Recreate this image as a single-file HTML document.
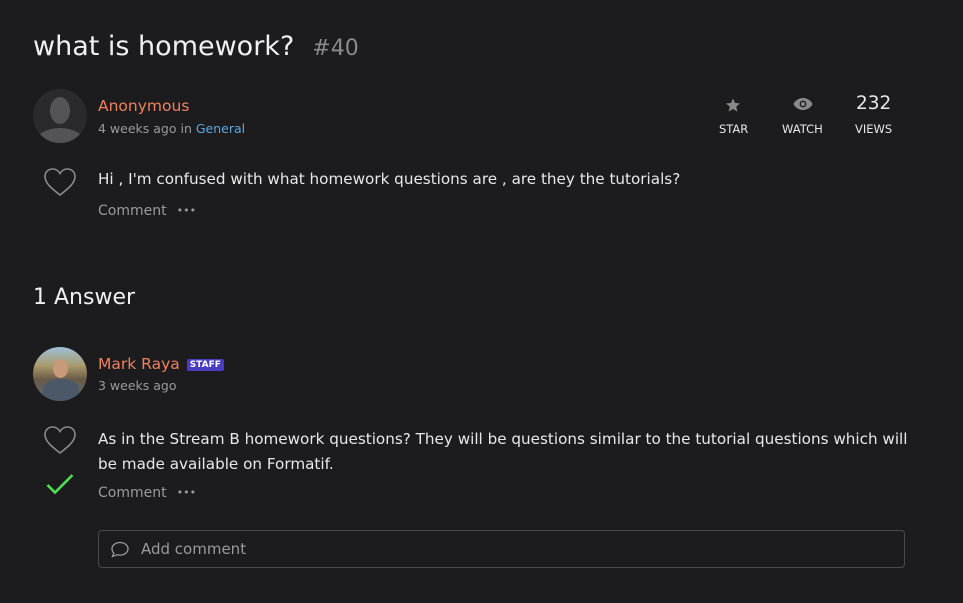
<!DOCTYPE html>
<html><head><meta charset="utf-8"><style>
body{margin:0;background:#1c1c1e;width:963px;height:603px;overflow:hidden;font-family:"DejaVu Sans","Liberation Sans",sans-serif;color:#e8e8e8;position:relative}
.a{position:absolute;white-space:nowrap}
.gray{color:#9a9a9a}
.or{color:#f0805c}
.dots{margin-left:10px;font-size:11px;vertical-align:1px}
</style></head><body>
<div class="a" style="left:33px;top:31px;font-size:27px;color:#f0f0f0">what is homework?<span style="color:#8a8a8a;font-size:22px;margin-left:18px">#40</span></div>
<div class="a" style="left:33px;top:89px;width:54px;height:54px;border-radius:50%;background:#2a2a2c;overflow:hidden">
<div style="position:absolute;left:17px;top:8px;width:20px;height:27px;border-radius:50%;background:#545456"></div>
<div style="position:absolute;left:2px;top:39px;width:50px;height:30px;border-radius:50%;background:#545456"></div></div>
<div class="a or" style="left:98px;top:97px;font-size:15.5px">Anonymous</div>
<div class="a gray" style="left:98px;top:121px;font-size:12.5px">4 weeks ago in <span style="color:#5aa8e6">General</span></div>
<svg class="a" style="left:725px;top:97px" width="16" height="16" viewBox="0 0 24 24"><path fill="#8a8a8a" d="M12 2l3 7 7.5.6-5.7 5 1.8 7.4L12 18l-6.6 4 1.8-7.4-5.7-5L9 9z"/></svg>
<div class="a" style="left:719px;top:122px;font-size:11.5px">STAR</div>
<svg class="a" style="left:793px;top:97px" width="20" height="14" viewBox="0 0 20 14"><path fill="#8a8a8a" d="M10 1C5 1 1.5 4.5 0.5 7 1.5 9.5 5 13 10 13s8.5-3.5 9.5-6C18.5 4.5 15 1 10 1z"/><circle cx="10" cy="7" r="3.4" fill="#1c1c1e"/><circle cx="10" cy="7" r="2" fill="#8a8a8a"/></svg>
<div class="a" style="left:782px;top:122px;font-size:11.5px">WATCH</div>
<div class="a" style="left:856px;top:93px;font-size:18.5px">232</div>
<div class="a" style="left:855px;top:122px;font-size:11.5px">VIEWS</div>
<svg class="a" style="left:43px;top:167px" width="34" height="30" viewBox="0 0 34 30"><path fill="none" stroke="#8a8a8a" stroke-width="1.6" d="M17 28C8 21 2 16 2 9.5 2 5 5.5 2 9.5 2 13 2 15.5 4 17 6.5 18.5 4 21 2 24.5 2 28.5 2 32 5 32 9.5 32 16 26 21 17 28z"/></svg>
<div class="a" style="left:98px;top:170px;font-size:15.2px">Hi , I'm confused with what homework questions are , are they the tutorials?</div>
<div class="a gray" style="left:98px;top:203px;font-size:14px">Comment<span class="dots">•••</span></div>
<div class="a" style="left:33px;top:285px;font-size:22px;color:#f0f0f0">1 Answer</div>
<div class="a" style="left:33px;top:347px;width:54px;height:54px;border-radius:50%;background:linear-gradient(180deg,#9fc0d8 0%,#a89a6a 35%,#6b5a48 60%,#5a6878 100%);overflow:hidden">
<div style="position:absolute;left:20px;top:12px;width:15px;height:19px;border-radius:50%;background:#c89a7a"></div>
<div style="position:absolute;left:10px;top:32px;width:36px;height:30px;border-radius:40%;background:#4a5868"></div></div>
<div class="a or" style="left:98px;top:355px;font-size:15.5px">Mark Raya <span style="display:inline-block;vertical-align:2px;background:#4a3cc0;color:#fff;font-size:9px;font-weight:bold;padding:1px 3px;border-radius:2px;margin-left:2px">STAFF</span></div>
<div class="a gray" style="left:98px;top:378px;font-size:12.5px">3 weeks ago</div>
<svg class="a" style="left:43px;top:425px" width="34" height="30" viewBox="0 0 34 30"><path fill="none" stroke="#8a8a8a" stroke-width="1.6" d="M17 28C8 21 2 16 2 9.5 2 5 5.5 2 9.5 2 13 2 15.5 4 17 6.5 18.5 4 21 2 24.5 2 28.5 2 32 5 32 9.5 32 16 26 21 17 28z"/></svg>
<svg class="a" style="left:46px;top:473px" width="28" height="22" viewBox="0 0 28 22"><path fill="none" stroke="#4ee04e" stroke-width="2.6" d="M1.5 12l7.5 7.5L26.5 2"/></svg>
<div class="a" style="left:98px;top:427px;font-size:15.2px;line-height:25px">As in the Stream B homework questions? They will be questions similar to the tutorial questions which will<br>be made available on Formatif.</div>
<div class="a gray" style="left:98px;top:485px;font-size:14px">Comment<span class="dots">•••</span></div>
<div class="a" style="left:98px;top:530px;width:805px;height:36px;border:1px solid #4a4a4c;border-radius:4px"></div>
<svg class="a" style="left:110px;top:541px" width="20" height="17" viewBox="0 0 20 17"><path fill="none" stroke="#9a9a9a" stroke-width="1.3" d="M10 1.5c4.5 0 8 2.8 8 6.3s-3.5 6.3-8 6.3c-1 0-2-.1-2.8-.4L2.5 15.5l1.3-3.4C2.6 11 2 9.5 2 7.8 2 4.3 5.5 1.5 10 1.5z"/></svg>
<div class="a gray" style="left:141px;top:540px;font-size:15px">Add comment</div>
</body></html>
